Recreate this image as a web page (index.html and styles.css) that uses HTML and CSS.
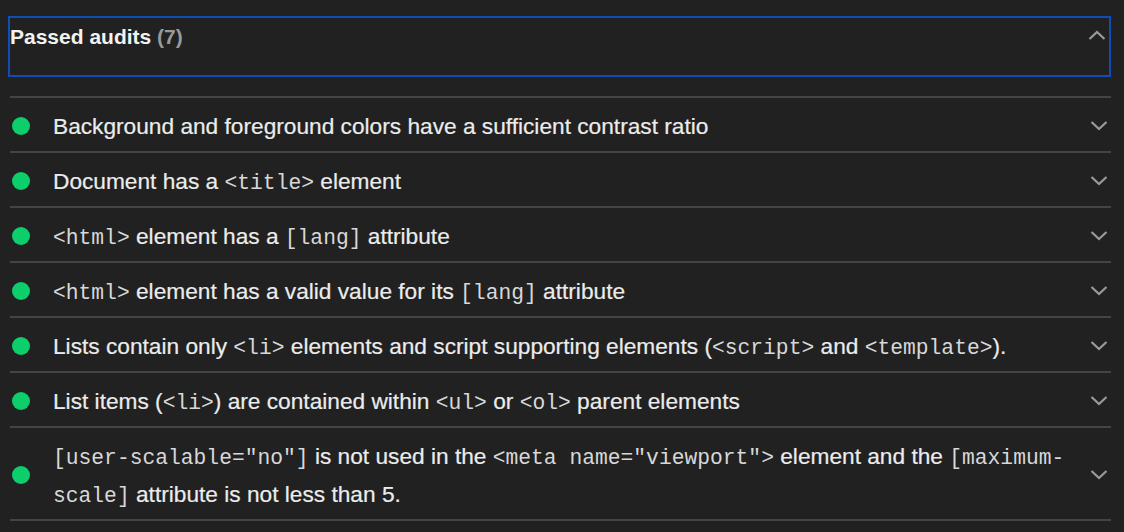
FILE: index.html
```html
<!DOCTYPE html>
<html>
<head>
<meta charset="utf-8">
<link rel="stylesheet" href="styles.css">
</head>
<body>
<div class="group">
  <div class="summary">
    <span class="title">Passed audits <span class="count">(7)</span></span>
    <svg class="chev" width="18" height="10" viewBox="0 0 18 10"><path d="M1.5 9 L9 2 L16.5 9" fill="none" stroke="#9a9a9a" stroke-width="2.2"/></svg>
  </div>
  <div class="list">
    <div class="row"><span class="dot"></span><span class="text">Background and foreground colors have a sufficient contrast ratio</span><svg class="chev" width="18" height="10" viewBox="0 0 18 10"><path d="M1.5 1 L9 8 L16.5 1" fill="none" stroke="#9a9a9a" stroke-width="2.2"/></svg></div>
    <div class="row"><span class="dot"></span><span class="text">Document has a <code>&lt;title&gt;</code> element</span><svg class="chev" width="18" height="10" viewBox="0 0 18 10"><path d="M1.5 1 L9 8 L16.5 1" fill="none" stroke="#9a9a9a" stroke-width="2.2"/></svg></div>
    <div class="row"><span class="dot"></span><span class="text"><code>&lt;html&gt;</code> element has a <code>[lang]</code> attribute</span><svg class="chev" width="18" height="10" viewBox="0 0 18 10"><path d="M1.5 1 L9 8 L16.5 1" fill="none" stroke="#9a9a9a" stroke-width="2.2"/></svg></div>
    <div class="row"><span class="dot"></span><span class="text"><code>&lt;html&gt;</code> element has a valid value for its <code>[lang]</code> attribute</span><svg class="chev" width="18" height="10" viewBox="0 0 18 10"><path d="M1.5 1 L9 8 L16.5 1" fill="none" stroke="#9a9a9a" stroke-width="2.2"/></svg></div>
    <div class="row"><span class="dot"></span><span class="text">Lists contain only <code>&lt;li&gt;</code> elements and script supporting elements (<code>&lt;script&gt;</code> and <code>&lt;template&gt;</code>).</span><svg class="chev" width="18" height="10" viewBox="0 0 18 10"><path d="M1.5 1 L9 8 L16.5 1" fill="none" stroke="#9a9a9a" stroke-width="2.2"/></svg></div>
    <div class="row"><span class="dot"></span><span class="text">List items (<code>&lt;li&gt;</code>) are contained within <code>&lt;ul&gt;</code> or <code>&lt;ol&gt;</code> parent elements</span><svg class="chev" width="18" height="10" viewBox="0 0 18 10"><path d="M1.5 1 L9 8 L16.5 1" fill="none" stroke="#9a9a9a" stroke-width="2.2"/></svg></div>
    <div class="row"><span class="dot"></span><span class="text"><code>[user-scalable="no"]</code> is not used in the <code>&lt;meta name="viewport"&gt;</code> element and the <code>[maximum-</code><code>scale]</code> attribute is not less than 5.</span><svg class="chev" width="18" height="10" viewBox="0 0 18 10"><path d="M1.5 1 L9 8 L16.5 1" fill="none" stroke="#9a9a9a" stroke-width="2.2"/></svg></div>
  </div>
</div>
</body>
</html>
```

FILE: styles.css
```css
html, body {
  background: #212121;
}
body {
  margin: 16px 13px 0 8px;
  font-family: "Liberation Sans", Arial, sans-serif;
  color: #ececec;
}
.summary {
  border: 2px solid #0d4fb5;
  height: 57px;
  box-sizing: content-box;
  display: flex;
  justify-content: space-between;
  align-items: flex-start;
  padding: 0 3px 0 0;
}
.title {
  font-weight: bold;
  font-size: 21px;
  line-height: 26px;
  margin-top: 6px;
  color: #f2f2f2;
}
.count {
  color: #9a9a9a;
}
.summary .chev {
  margin-top: 12px;
}
.list {
  margin: 19px 0 0 2px;
  border-top: 2px solid #444;
}
.row {
  display: flex;
  align-items: center;
  border-bottom: 2px solid #444;
  padding: 9px 3px 6px 2px;
  min-height: 38px;
}
.dot {
  flex: none;
  width: 18px;
  height: 18px;
  border-radius: 50%;
  background: #0cce6b;
  margin-right: 23px;
}
.text {
  flex: 1;
  font-size: 22.7px;
  line-height: 38px;
  padding-right: 10px;
  -webkit-text-stroke: 0.2px #ececec;
}
code {
  font-family: "Liberation Mono", "Courier New", monospace;
  font-size: 21.3px;
  line-height: 22px;
  color: #d8d8d8;
  -webkit-text-stroke: 0;
}
.chev {
  flex: none;
}
```
